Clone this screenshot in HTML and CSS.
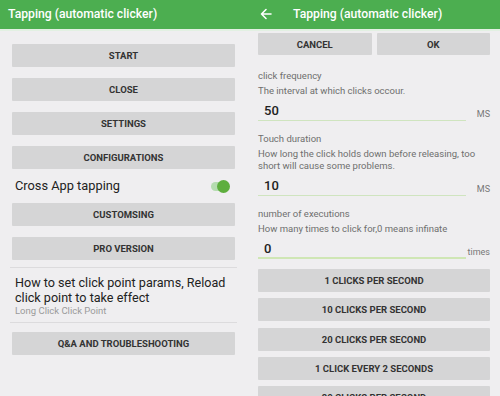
FILE: index.html
```html
<!DOCTYPE html>
<html>
<head>
<meta charset="utf-8">
<link rel="stylesheet" href="styles.css">
</head>
<body>
<div class="screens">
  <section class="screen screen-left">
    <header class="appbar">
      <span class="title">Tapping (automatic clicker)</span>
    </header>
    <div class="content left-content">
      <div class="btn">START</div>
      <div class="btn">CLOSE</div>
      <div class="btn">SETTINGS</div>
      <div class="btn">CONFIGURATIONS</div>
      <div class="switch-row">
        <span class="switch-label">Cross App tapping</span>
        <span class="switch"><span class="thumb"></span></span>
      </div>
      <div class="btn">CUSTOMSING</div>
      <div class="btn">PRO VERSION</div>
      <div class="pref">
        <div class="pref-title">How to set click point params, Reload click point to take effect</div>
        <div class="pref-sub">Long Click Click Point</div>
      </div>
      <div class="btn">Q&amp;A AND TROUBLESHOOTING</div>
    </div>
  </section>
  <section class="screen screen-right">
    <header class="appbar">
      <svg class="back" width="12" height="12" viewBox="0 0 12 12"><path d="M11 6H1.5M6 1.5L1.5 6L6 10.5" fill="none" stroke="#fff" stroke-width="1.6" stroke-linecap="round" stroke-linejoin="round"/></svg>
      <span class="title">Tapping (automatic clicker)</span>
    </header>
    <div class="content right-content">
      <div class="btn-row">
        <div class="btn">CANCEL</div>
        <div class="btn">OK</div>
      </div>
      <div class="field first">
        <div class="label">click frequency</div>
        <div class="desc">The interval at which clicks occour.</div>
        <div class="value-row">
          <div class="value">50</div>
          <div class="unit">MS</div>
        </div>
      </div>
      <div class="field">
        <div class="label">Touch duration</div>
        <div class="desc">How long the click holds down before releasing, too short will cause some problems.</div>
        <div class="value-row">
          <div class="value">10</div>
          <div class="unit">MS</div>
        </div>
      </div>
      <div class="field">
        <div class="label">number of executions</div>
        <div class="desc">How many times to click for,0 means infinate</div>
        <div class="value-row">
          <div class="value focused">0</div>
          <div class="unit">times</div>
        </div>
      </div>
      <div class="presets">
        <div class="btn">1 CLICKS PER SECOND</div>
        <div class="btn">10 CLICKS PER SECOND</div>
        <div class="btn">20 CLICKS PER SECOND</div>
        <div class="btn">1 CLICK EVERY 2 SECONDS</div>
        <div class="btn">30 CLICKS PER SECOND</div>
      </div>
    </div>
  </section>
</div>
</body>
</html>
```
FILE: styles.css
```css
* { box-sizing: border-box; }
html, body { margin: 0; padding: 0; }
body {
  width: 500px;
  height: 396px;
  overflow: hidden;
  background: #efeef0;
  font-family: Roboto, "Liberation Sans", sans-serif;
}
.screens {
  display: flex;
  height: 396px;
}
.screen {
  display: flex;
  flex-direction: column;
  overflow: hidden;
}
.screen-left { width: 250px; }
.screen-right { width: 250px; }
.appbar {
  flex-shrink: 0;
  height: 31px;
  background: #4cae50;
  border-bottom: 2px solid #e2f0e2;
  display: flex;
  align-items: center;
  color: #fff;
  padding-bottom: 2px;
}
.title {
  font-size: 12.2px;
  font-weight: 500;
  letter-spacing: 0;
}
.screen-left .title { margin-left: 8px; }
.back { margin-left: 10px; margin-right: 21px; }
.btn {
  flex-shrink: 0;
  height: 23px;
  background: #d5d5d6;
  color: #333;
  font-size: 9.5px;
  font-weight: 700;
  display: flex;
  align-items: center;
  justify-content: center;
  border-radius: 1px;
}
.left-content {
  display: flex;
  flex-direction: column;
  gap: 11px;
  padding: 13px 15px 0 12px;
}
.switch-row {
  flex-shrink: 0;
  height: 12px;
  display: flex;
  align-items: center;
  justify-content: space-between;
  padding: 0 6px 0 3px;
}
.switch-label {
  font-size: 12.8px;
  color: #222;
  line-height: 12px;
}
.switch {
  position: relative;
  width: 18px;
  height: 9px;
  border-radius: 5px;
  background: #b5dcb0;
}
.thumb {
  position: absolute;
  right: -1px;
  top: -2px;
  width: 13px;
  height: 13px;
  border-radius: 50%;
  background: #5eae3e;
}
.pref {
  flex-shrink: 0;
  margin: -4px -2px -2px -2px;
  padding: 7px 3px 5px 5px;
  border-top: 1px solid #dcdbdd;
  border-bottom: 1px solid #dcdbdd;
}
.pref-title {
  font-size: 12.6px;
  line-height: 15px;
  color: #222;
}
.pref-sub {
  font-size: 9.5px;
  line-height: 12px;
  color: #9a9a9a;
}
.right-content {
  padding: 2px 10px 0 8px;
}
.btn-row {
  display: grid;
  grid-template-columns: 1fr 1fr;
  gap: 5px;
}
.btn-row .btn { height: 22px; }
.field { margin-top: 11px; }
.field.first { margin-top: 14px; }
.label {
  font-size: 9.5px;
  line-height: 14px;
  color: #6e6e6e;
}
.desc {
  font-size: 9.5px;
  line-height: 12px;
  color: #6e6e6e;
  margin-top: 2px;
  padding-right: 8px;
}
.value-row {
  display: flex;
  align-items: flex-end;
  height: 24px;
}
.value {
  flex: 1;
  height: 24px;
  border-bottom: 1px solid #cfe4bf;
  font-size: 13px;
  font-weight: 500;
  color: #222;
  padding: 6px 0 0 6px;
}
.value.focused { border-bottom: 2px solid #cfe6b5; }
.unit {
  width: 24px;
  text-align: right;
  font-size: 9px;
  color: #777;
  padding-bottom: 2px;
}
.presets {
  display: flex;
  flex-direction: column;
  gap: 6.3px;
  margin-top: 10px;
}
```
